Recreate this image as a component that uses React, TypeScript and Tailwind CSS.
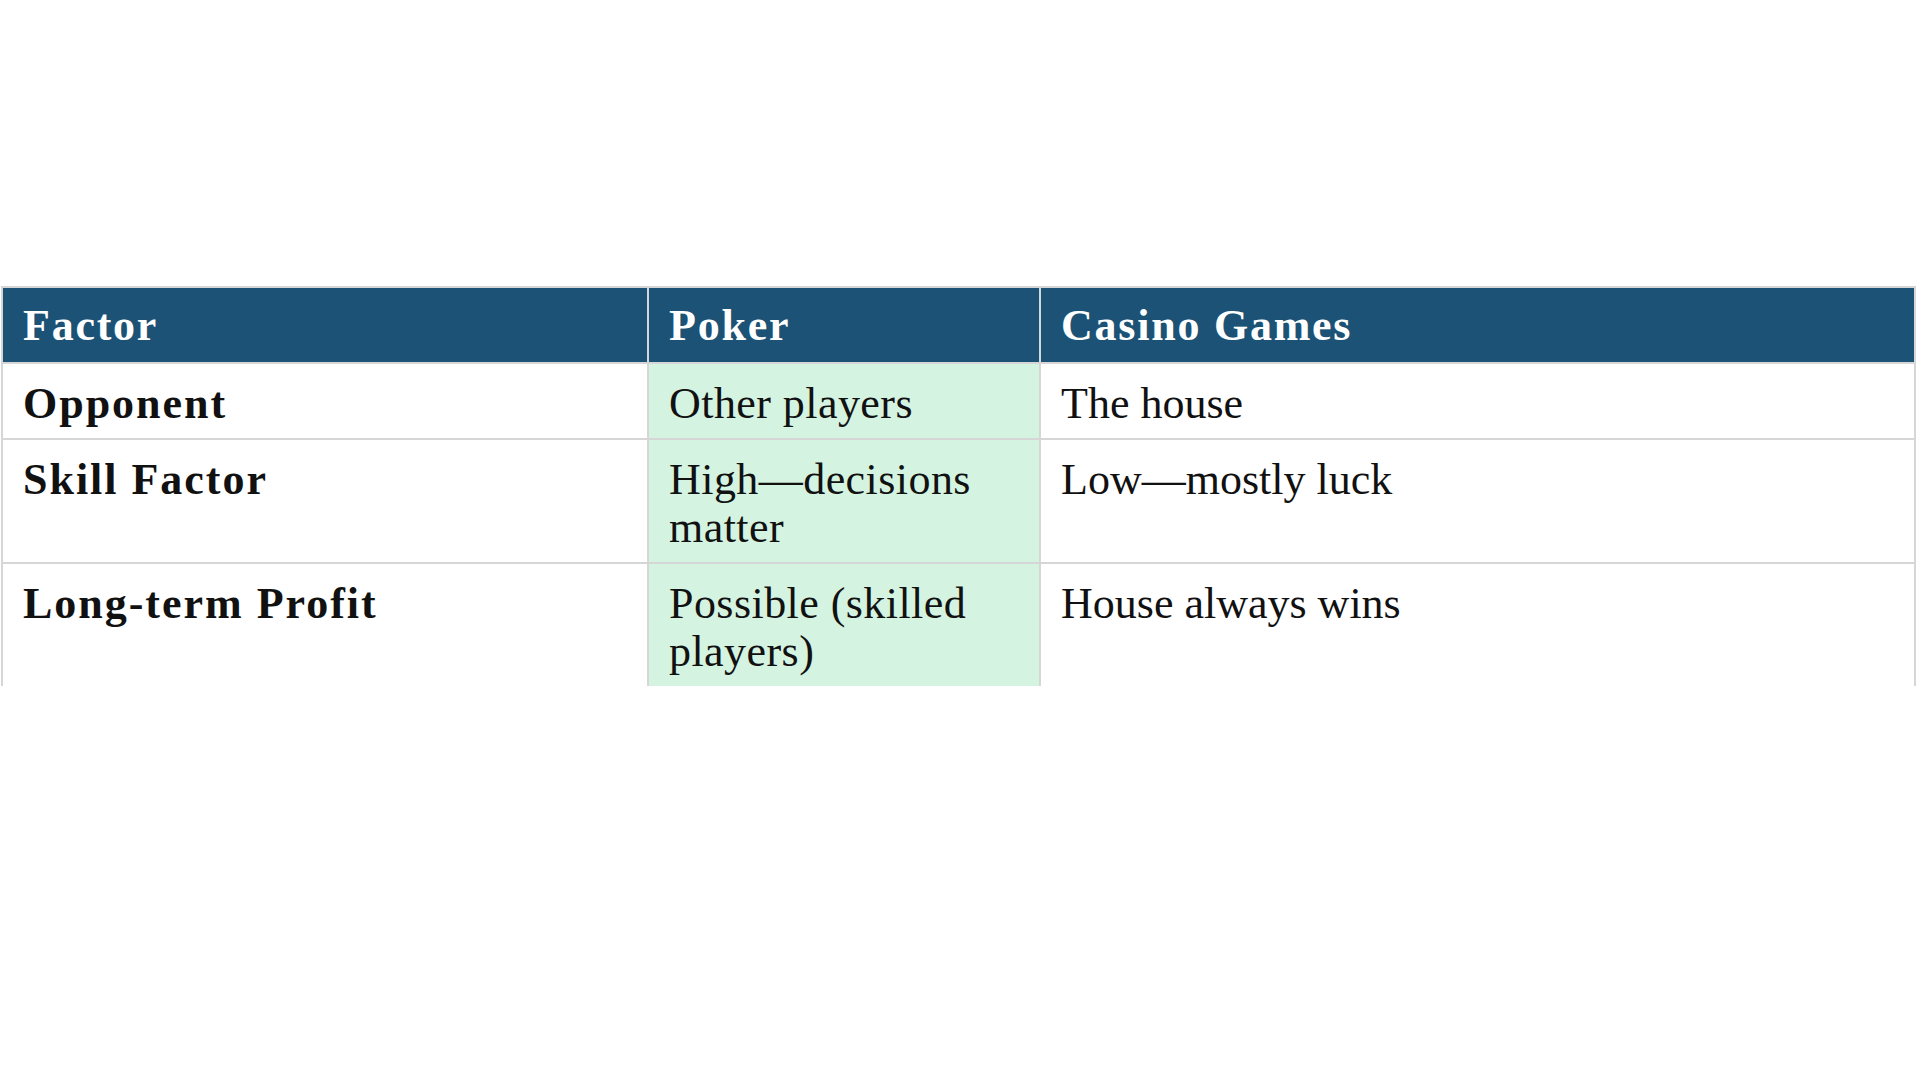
const rows = [
  { factor: "Opponent", poker: "Other players", casino: "The house" },
  { factor: "Skill Factor", poker: "High—decisions matter", casino: "Low—mostly luck" },
  { factor: "Long-term Profit", poker: "Possible (skilled players)", casino: "House always wins" },
];

export default function App() {
  return (
    <div className="w-[1920px] h-[1080px] bg-white font-['Liberation_Serif',Georgia,serif] text-[#111]">
      <div className="h-[286px]" />
      <div className="ml-[1px] w-[1915px] h-[400px] overflow-hidden">
        <table className="w-full border-collapse table-fixed text-[44px] leading-[48px]">
          <colgroup>
            <col className="w-[646px]" />
            <col className="w-[392px]" />
            <col />
          </colgroup>
          <thead>
            <tr className="bg-[#1c5275] text-white">
              <th className="border-2 border-[#d6d6d6] text-left font-bold tracking-[0.04em] px-[20px] pt-[14px] pb-[12px]">Factor</th>
              <th className="border-2 border-[#d6d6d6] text-left font-bold tracking-[0.04em] px-[20px] pt-[14px] pb-[12px]">Poker</th>
              <th className="border-2 border-[#d6d6d6] text-left font-bold tracking-[0.04em] px-[20px] pt-[14px] pb-[12px]">Casino Games</th>
            </tr>
          </thead>
          <tbody>
            {rows.map((r) => (
              <tr key={r.factor} className="align-top">
                <td className="border-2 border-[#d6d6d6] font-bold tracking-[0.045em] px-[20px] pt-[16px] pb-[10px]">{r.factor}</td>
                <td className="border-2 border-[#d6d6d6] bg-[#d4f3e1] tracking-[0.01em] px-[20px] pt-[16px] pb-[10px]">{r.poker}</td>
                <td className="border-2 border-[#d6d6d6] px-[20px] pt-[16px] pb-[10px]">{r.casino}</td>
              </tr>
            ))}
          </tbody>
        </table>
      </div>
    </div>
  );
}
